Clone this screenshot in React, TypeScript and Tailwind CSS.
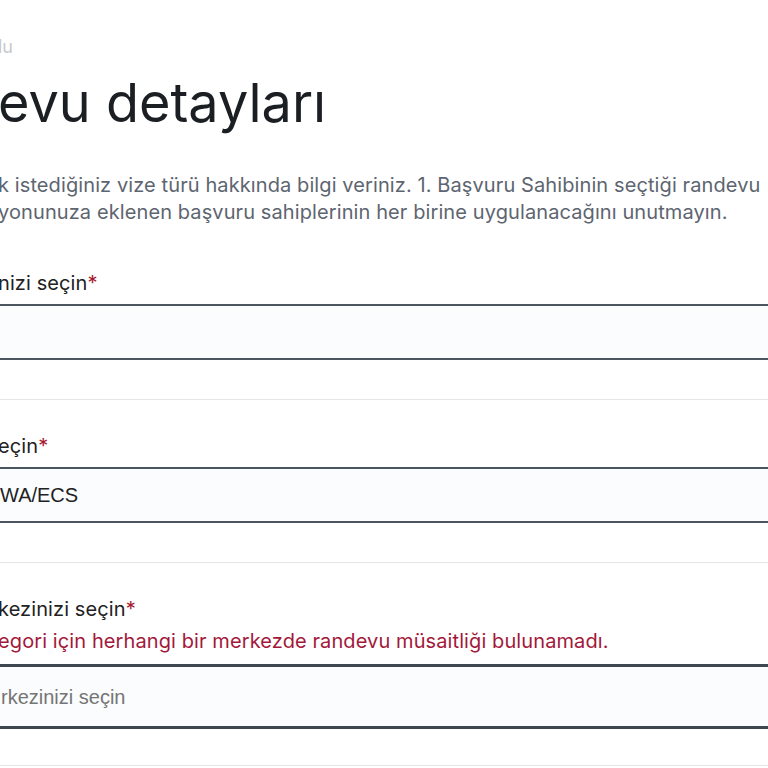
import React from 'react';

const inter = { fontFamily: 'Inter, "Noto Sans", sans-serif' };

type Field = {
  label: string;
  value?: string;
  placeholder?: string;
  error?: string;
  thick?: boolean;
};

const FIELDS: Field[] = [
  { label: 'nizi seçin', value: '' },
  { label: 'eçin', value: 'WA/ECS' },
  {
    label: 'kezinizi seçin',
    placeholder: 'rkezinizi seçin',
    error: 'egori için herhangi bir merkezde randevu müsaitliği bulunamadı.',
    thick: true,
  },
];

function FieldBlock({ f, first }: { f: Field; first: boolean }) {
  return (
    <div className={first ? 'pt-[0px]' : 'pt-[33px]'}>
      <label className="block pl-[18px] text-[20px] leading-[27px] tracking-[0.1px] text-[#222222]">
        {f.label}
        <span className="text-[#a6192e]">*</span>
      </label>
      {f.error && (
        <p className="mt-[3px] pl-[18px] text-[20px] leading-[30px] tracking-[0.1px] text-[#a3183a]">
          {f.error}
        </p>
      )}
      <div
        className={
          'flex items-center bg-[#fafcfe] px-[18px] text-[20px] ' +
          (f.thick
            ? 'mt-[8px] h-[65px] border-[3px] border-[#3e4650]'
            : 'mt-[7px] h-[56px] border-2 border-[#4a5560]')
        }
        style={{ fontFamily: '"Liberation Sans", Arial, sans-serif' }}
      >
        {f.value ? (
          <span className="text-[#222222]">{f.value}</span>
        ) : (
          <span className="text-[#757575]">{f.placeholder}</span>
        )}
      </div>
      <div className={(f.thick ? 'mt-[36px]' : 'mt-[39px]') + ' h-px bg-[#e6e6e6]'} />
    </div>
  );
}

export default function App() {
  return (
    <div className="h-[768px] w-[768px] overflow-hidden bg-white" style={inter}>
      <div className="-ml-[20px] w-[820px] pt-[34px]">
        <div className="pl-[18px] text-[18px] leading-[26px] text-[#c9c9c9]">lu</div>
        <h1 className="mt-[15px] pl-[18px] text-[54px] leading-[56px] font-normal text-[#1b1e22]">
          evu detayları
        </h1>
        <p className="mt-[41px] pl-[18px] text-[20px] leading-[27px] tracking-[0.1px] text-[#5d6570]">
          k istediğiniz vize türü hakkında bilgi veriniz. 1. Başvuru Sahibinin seçtiği randevu
          <br />
          yonunuza eklenen başvuru sahiplerinin her birine uygulanacağını unutmayın.
        </p>
        <div className="mt-[44px]">
          {FIELDS.map((f, i) => (
            <FieldBlock key={i} f={f} first={i === 0} />
          ))}
        </div>
      </div>
    </div>
  );
}
